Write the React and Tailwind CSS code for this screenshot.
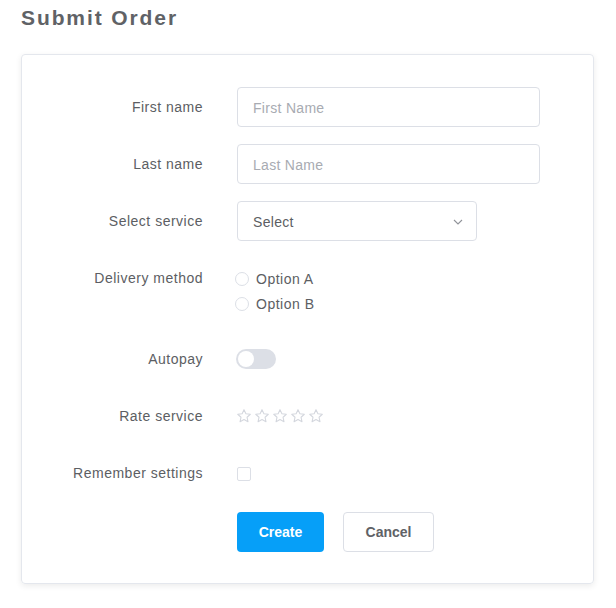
import { useState } from 'react';

const font = { fontFamily: '"Liberation Sans", Arial, sans-serif' };

function Star() {
  return (
    <svg width="16" height="16" viewBox="0 0 24 24" fill="none" stroke="#d4d7de" strokeWidth="1.6" strokeLinejoin="round">
      <path d="M12 2.5l2.9 6.2 6.6.7-4.9 4.5 1.4 6.6L12 17.2l-5.9 3.3 1.4-6.6-4.9-4.5 6.6-.7z" />
    </svg>
  );
}

function Row({ label, children, className = 'h-[40px]', labelClass = 'h-[40px]' }) {
  return (
    <div className={`flex ${className}`}>
      <div className={`w-[181px] shrink-0 flex items-center justify-end pt-[1px] text-[14px] tracking-[0.5px] text-[#5c5e63] ${labelClass}`}>
        {label}
      </div>
      <div className="ml-[34px] flex-1">{children}</div>
    </div>
  );
}

function App() {
  const [autopay, setAutopay] = useState(false);

  return (
    <div className="min-h-screen bg-white px-[21px] pt-[4px]" style={font}>
      {/* Title */}
      <h1 className="text-[21px] font-bold tracking-[1.9px] text-[#606266] leading-[28px] h-[50px]">
        Submit Order
      </h1>

      {/* Card */}
      <div className="w-[573px] border border-[#e4e7ed] rounded-[4px] shadow-[0_2px_6px_rgba(0,0,0,0.08)] pt-[32px] pb-[31px]">
        <div className="flex flex-col gap-[17px]">
          <Row label="First name">
            <input
              placeholder="First Name"
              className="w-[303px] h-[40px] border border-[#dcdfe6] rounded-[4px] px-[15px] pt-[1px] text-[14px] tracking-[0.3px] text-[#606266] placeholder:text-[#a8abb2] outline-none"
            />
          </Row>
          <Row label="Last name">
            <input
              placeholder="Last Name"
              className="w-[303px] h-[40px] border border-[#dcdfe6] rounded-[4px] px-[15px] pt-[1px] text-[14px] tracking-[0.3px] text-[#606266] placeholder:text-[#a8abb2] outline-none"
            />
          </Row>
          <Row label="Select service">
            <div className="w-[240px] h-[40px] border border-[#dcdfe6] rounded-[4px] pl-[15px] pr-[12px] pt-[2px] flex items-center justify-between text-[14px] tracking-[0.3px] text-[#5c5e63]">
              <span>Select</span>
              <svg width="12" height="12" viewBox="0 0 12 12" fill="none" stroke="#909399" strokeWidth="1.1">
                <path d="M2 4l4 4 4-4" />
              </svg>
            </div>
          </Row>
          <Row label="Delivery method" className="h-[64px]">
            <div className="flex flex-col pt-[8px]">
              {['Option A', 'Option B'].map((o) => (
                <label key={o} className="h-[25px] flex items-center text-[14px] tracking-[0.5px] text-[#5c5e63]">
                  <span className="w-[14px] h-[14px] rounded-full border border-[#dcdfe6] bg-white -ml-[2px]" />
                  <span className="ml-[7px] pt-[1px]">{o}</span>
                </label>
              ))}
            </div>
          </Row>
          <Row label="Autopay">
            <div className="h-[40px] flex items-center -ml-[1px]">
              <button
                onClick={() => setAutopay(!autopay)}
                className={`w-[40px] h-[20px] rounded-full p-[2px] flex ${autopay ? 'bg-[#069ff8] justify-end' : 'bg-[#dcdfe6] justify-start'}`}
              >
                <span className="w-[16px] h-[16px] rounded-full bg-white" />
              </button>
            </div>
          </Row>
          <Row label="Rate service">
            <div className="h-[40px] flex items-center gap-[2px] -ml-[1px]">
              <Star />
              <Star />
              <Star />
              <Star />
              <Star />
            </div>
          </Row>
          <Row label="Remember settings">
            <div className="h-[40px] flex items-center">
              <span className="w-[14px] h-[14px] border border-[#dcdfe6] rounded-[2px] bg-white mt-[2px]" />
            </div>
          </Row>
          <div className="flex mt-[2px]">
            <div className="w-[181px] shrink-0" />
            <div className="ml-[34px] flex gap-[19px]">
              <button className="w-[87px] h-[40px] rounded-[4px] bg-[#069ff8] text-white text-[14px] font-bold pt-[1px]">
                Create
              </button>
              <button className="w-[91px] h-[40px] rounded-[4px] border border-[#dcdfe6] bg-white text-[#606266] text-[14px] font-bold pt-[1px]">
                Cancel
              </button>
            </div>
          </div>
        </div>
      </div>
    </div>
  );
}

export default App;
